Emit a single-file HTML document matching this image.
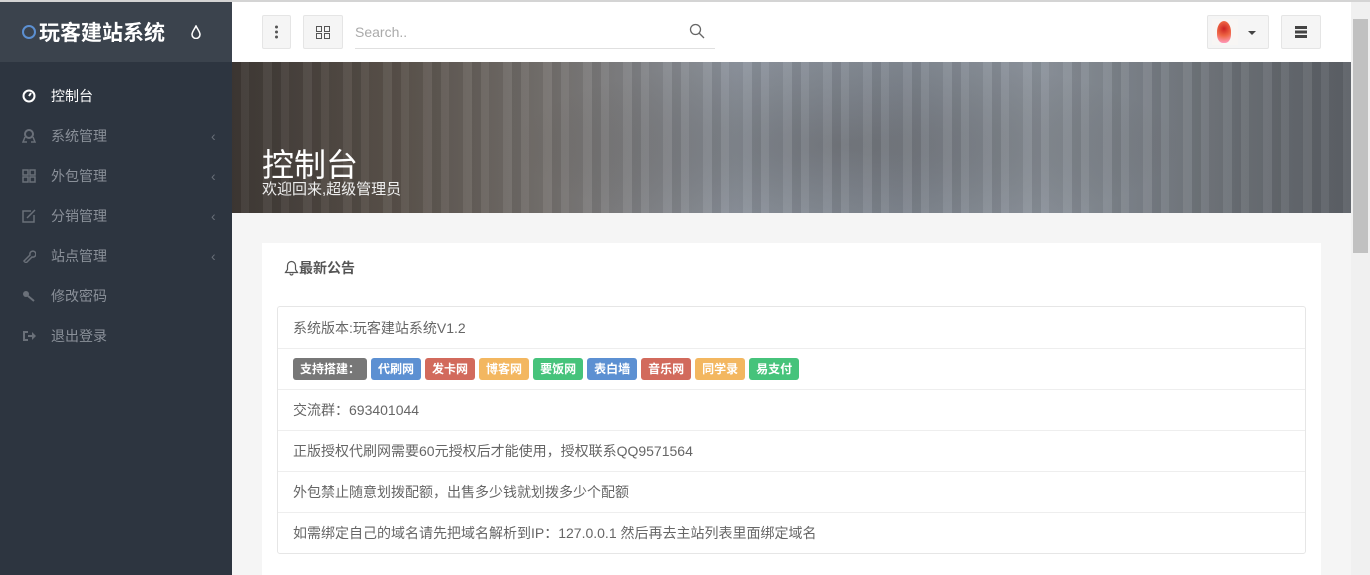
<!DOCTYPE html>
<html><head><meta charset="utf-8">
<style>
*{box-sizing:border-box;margin:0;padding:0}
html,body{width:1370px;height:575px;overflow:hidden}
body{font-family:"Liberation Sans","Noto Sans CJK SC",sans-serif;background:#f5f5f5;position:relative}
.tl{position:absolute;left:0;top:0;width:1370px;height:2px;background:#d4d4d4}
.side{position:absolute;left:0;top:2px;width:232px;height:573px;background:#2d3540}
.logo{height:60px;background:#3b434d;color:#fff;font-size:21px;font-weight:bold;display:flex;align-items:center;padding-left:22px}
.logo .c{width:14px;height:14px;border:2px solid #5c90d2;border-radius:50%;margin-right:3px}
.nav{padding-top:14px}
.nav div{height:40px;display:flex;align-items:center;padding-left:22px;color:#8a9099;font-size:14px;position:relative}
.nav div.a{color:#fff}
.nav .i{width:14px;height:14px;margin-right:15px;display:inline-block}
.nav .ar{position:absolute;left:211px;font-size:14px;color:#6a7079}
.top{position:absolute;left:232px;top:2px;width:1119px;height:60px;background:#fff}
.btn{position:absolute;top:13px;height:34px;background:#f5f5f5;border:1px solid #e5e5e5;border-radius:2px}
.search{position:absolute;left:123px;top:13px;width:360px;height:34px;border-bottom:1px solid #e0e0e0;color:#aaa;font-size:14px;line-height:34px}
.banner{position:absolute;left:232px;top:62px;width:1119px;height:151px;background:
repeating-linear-gradient(90deg,rgba(0,0,0,.07) 0 9px,rgba(255,255,255,.04) 9px 17px,rgba(0,0,0,.04) 17px 31px,rgba(255,255,255,.05) 31px 40px),
radial-gradient(ellipse 30% 60% at 55% 55%,rgba(60,55,50,.25),transparent),
linear-gradient(90deg,#3f3935 0%,#5b534c 15%,#75716e 28%,#8f96a0 45%,#838a94 60%,#8d949d 72%,#6f747a 88%,#5c6066 100%)}
.banner h1{position:absolute;left:30px;top:78px;color:#fff;font-size:32px;font-weight:normal}
.banner p{position:absolute;left:30px;top:116px;color:#eee;font-size:15px}
.card{position:absolute;left:262px;top:243px;width:1059px;height:340px;background:#fff}
.card h3{position:absolute;left:22px;top:15px;font-size:14px;color:#555;font-weight:bold;display:flex;align-items:center}
.list{position:absolute;left:15px;top:63px;width:1029px;border:1px solid #e6e6e6;border-radius:3px}
.list div{height:41px;border-top:1px solid #eee;display:flex;align-items:center;padding-left:15px;font-size:14px;color:#666}
.list div:first-child{border-top:0}
.t{color:#fff;font-size:12px;font-weight:bold;padding:0 7px;border-radius:3px;margin-right:4px;line-height:22px;height:22px}
.sb{position:absolute;left:1351px;top:2px;width:19px;height:573px;background:#f0f0f0}
.sb i{position:absolute;left:2px;top:17px;width:15px;height:234px;background:#c1c1c1}
</style></head><body>
<div class="tl"></div>
<div class="side">
<div class="logo"><span class="c"></span>玩客建站系统<svg style="margin-left:26px" width="10" height="14" viewBox="0 0 10 14"><path d="M5 1C3 5 1 7 1 9.5a4 4 0 0 0 8 0C9 7 7 5 5 1z" fill="none" stroke="#fff" stroke-width="1.5"/></svg></div>
<div class="nav">
<div class="a"><svg class="i" viewBox="0 0 14 14"><circle cx="7" cy="7" r="5.5" fill="none" stroke="#fff" stroke-width="2"/><path d="M7 7l2-3" stroke="#fff" stroke-width="2"/></svg>控制台</div>
<div><svg class="i" viewBox="0 0 14 14"><circle cx="7" cy="5" r="4" fill="none" stroke="#6a7079" stroke-width="2"/><path d="M3 8l-2 5h4M11 8l2 5H9" fill="none" stroke="#6a7079" stroke-width="1.5"/></svg>系统管理<span class="ar">&lsaquo;</span></div>
<div><svg class="i" viewBox="0 0 14 14" fill="none" stroke="#6a7079" stroke-width="1.5"><rect x="1" y="1" width="5" height="5"/><rect x="8" y="1" width="5" height="5"/><rect x="1" y="8" width="5" height="5"/><rect x="8" y="8" width="5" height="5"/></svg>外包管理<span class="ar">&lsaquo;</span></div>
<div><svg class="i" viewBox="0 0 14 14" fill="none" stroke="#6a7079" stroke-width="1.5"><path d="M9 2H1v11h11V6"/><path d="M5 9l8-8"/></svg>分销管理<span class="ar">&lsaquo;</span></div>
<div><svg class="i" viewBox="0 0 14 14" fill="none" stroke="#6a7079" stroke-width="1.5"><path d="M2 12l6-6a3 3 0 1 1 2 2l-6 6z"/></svg>站点管理<span class="ar">&lsaquo;</span></div>
<div><svg class="i" viewBox="0 0 14 14"><circle cx="4" cy="5" r="3" fill="#6a7079"/><path d="M6 7l6 5" stroke="#6a7079" stroke-width="2"/></svg>修改密码</div>
<div><svg class="i" viewBox="0 0 14 14"><path d="M1 2h5v2H3v6h3v2H1z M6 6h4V3l4 4-4 4V8H6z" fill="#6a7079"/></svg>退出登录</div>
</div></div>
<div class="top">
<div class="btn" style="left:30px;width:29px"><svg width="27" height="32" viewBox="0 0 27 32"><circle cx="13.5" cy="11" r="1.5" fill="#555"/><circle cx="13.5" cy="16" r="1.5" fill="#555"/><circle cx="13.5" cy="21" r="1.5" fill="#555"/></svg></div>
<div class="btn" style="left:71px;width:40px"><svg width="38" height="32" viewBox="0 0 38 32" fill="none" stroke="#555"><rect x="12.5" y="10.5" width="5" height="5"/><rect x="20.5" y="10.5" width="5" height="5"/><rect x="12.5" y="17.5" width="5" height="5"/><rect x="20.5" y="17.5" width="5" height="5"/></svg></div>
<div class="search">Search..<svg style="position:absolute;right:10px;top:8px" width="16" height="16" viewBox="0 0 16 16" fill="none" stroke="#666" stroke-width="1.3"><circle cx="6.5" cy="6.5" r="5"/><path d="M10 10l5 5"/></svg></div>
<div class="btn" style="left:975px;width:62px"><div style="position:absolute;left:4px;top:3px;width:26px;height:26px;background:#f8f6f4"><div style="position:absolute;left:5px;top:2px;width:14px;height:22px;border-radius:50% 50% 40% 40%;background:radial-gradient(circle at 50% 35%,#c22 0%,#e64 45%,#f9b 90%)"></div></div><div style="position:absolute;left:40px;top:15px;border:4px solid transparent;border-top-color:#444;border-bottom:0"></div></div>
<div class="btn" style="left:1049px;width:40px"><svg width="38" height="32" viewBox="0 0 38 32" fill="#444"><rect x="13" y="10" width="12" height="3"/><rect x="13" y="14.5" width="12" height="3"/><rect x="13" y="19" width="12" height="3"/></svg></div>
</div>
<div class="banner"><h1>控制台</h1><p>欢迎回来,超级管理员</p></div>
<div class="card"><h3><svg width="15" height="16" viewBox="0 0 15 16" fill="none" stroke="#555" stroke-width="1.2"><path d="M7.5 1.5a4 4 0 0 0-4 4v4l-2 3h12l-2-3v-4a4 4 0 0 0-4-4zM6 13.5a1.5 1.5 0 0 0 3 0"/></svg>最新公告</h3>
<div class="list">
<div>系统版本:玩客建站系统V1.2</div>
<div><span class="t" style="background:#777">支持搭建：</span><span class="t" style="background:#5c90d2">代刷网</span><span class="t" style="background:#d26a5c">发卡网</span><span class="t" style="background:#f3b760">博客网</span><span class="t" style="background:#46c37b">要饭网</span><span class="t" style="background:#5c90d2">表白墙</span><span class="t" style="background:#d26a5c">音乐网</span><span class="t" style="background:#f3b760">同学录</span><span class="t" style="background:#46c37b">易支付</span></div>
<div>交流群：693401044</div>
<div>正版授权代刷网需要60元授权后才能使用，授权联系QQ9571564</div>
<div>外包禁止随意划拨配额，出售多少钱就划拨多少个配额</div>
<div>如需绑定自己的域名请先把域名解析到IP：127.0.0.1 然后再去主站列表里面绑定域名</div>
</div></div>
<div class="sb"><i></i></div>
</body></html>
